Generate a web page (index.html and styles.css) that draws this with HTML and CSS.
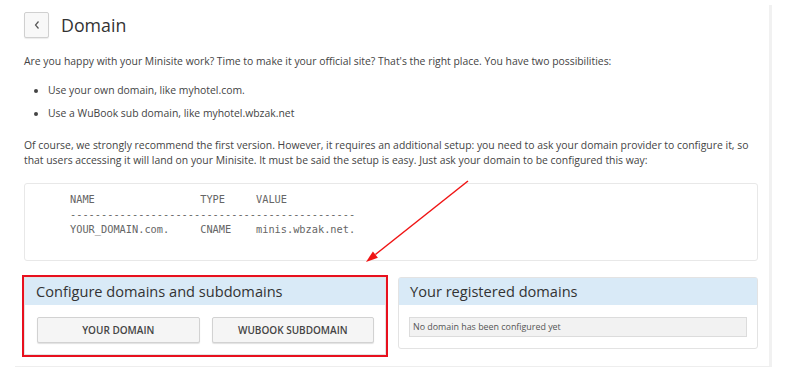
FILE: index.html
```html
<!DOCTYPE html>
<html lang="en">
<head>
    <meta charset="UTF-8">
    <meta name="viewport" content="width=device-width, initial-scale=1.0">
    <title>Domain - Minisite</title>
    <link rel="stylesheet" href="styles.css">
</head>
<body>
    <div class="page">
        <div class="page-header">
            <button class="back-btn" type="button" aria-label="Back">
                <svg width="8" height="10" viewBox="0 0 8 10"><polyline points="5.5,1.5 2.5,5 5.5,8.5" fill="none" stroke="#555" stroke-width="1.2"/></svg>
            </button>
            <h1>Domain</h1>
        </div>

        <p>Are you happy with your Minisite work? Time to make it your official site? That's the right place. You have two possibilities:</p>

        <ul class="options">
            <li>Use your own domain, like myhotel.com.</li>
            <li>Use a WuBook sub domain, like myhotel.wbzak.net</li>
        </ul>

        <p class="after-list">Of course, we strongly recommend the first version. However, it requires an additional setup: you need to ask your domain provider to configure it, so that users accessing it will land on your Minisite. It must be said the setup is easy. Just ask your domain to be configured this way:</p>

<pre class="dns">NAME                 TYPE     VALUE
----------------------------------------------
YOUR_DOMAIN.com.     CNAME    minis.wbzak.net.
&nbsp;</pre>

        <div class="panels">
            <div class="panel panel-marked">
                <div class="panel-heading">Configure domains and subdomains</div>
                <div class="panel-body buttons">
                    <button type="button" class="btn">Your domain</button>
                    <button type="button" class="btn">WuBook subdomain</button>
                </div>
            </div>
            <div class="panel">
                <div class="panel-heading">Your registered domains</div>
                <div class="panel-body">
                    <div class="empty-note">No domain has been configured yet</div>
                </div>
            </div>
        </div>
    </div>

    <!-- annotation arrow -->
    <svg class="arrow" width="790" height="383" viewBox="0 0 790 383">
        <line x1="468" y1="181" x2="375.4" y2="254.5" stroke="#f01414" stroke-width="1.5"/>
        <polygon points="366,262 377.9,257.7 372.9,251.4" fill="#f01414"/>
    </svg>
</body>
</html>
```

FILE: styles.css
```css
* {
    margin: 0;
    padding: 0;
    box-sizing: border-box;
}

body {
    background: white;
    font-family: 'Open Sans', 'Liberation Sans', sans-serif;
    font-size: 10.4px;
    line-height: 15px;
    color: #444;
    position: relative;
    width: 790px;
    height: 383px;
    overflow: hidden;
}

.page {
    margin: 5px 0 0 15px;
    width: 757px;
    padding: 7px 11px 11px 9px;
    border-right: 3px solid #f1f1f1;
    border-bottom: 1px solid #eee;
}

.page-header {
    display: flex;
    align-items: center;
    margin-bottom: 16px;
}

.back-btn {
    width: 25px;
    height: 26px;
    display: flex;
    align-items: center;
    justify-content: center;
    background: #f8f8f8;
    border: 1px solid #d0d0d0;
    border-radius: 2px;
    box-shadow: 0 1px 1px rgba(0, 0, 0, 0.08);
    cursor: pointer;
}

h1 {
    font-size: 17.8px;
    font-weight: 400;
    color: #333;
    margin-left: 12px;
    line-height: 26px;
}

.options {
    margin: 14px 0 0 0;
    padding-left: 24px;
}

.options li {
    margin-bottom: 8px;
}

.after-list {
    margin-top: 17px;
}

.dns {
    margin-top: 15px;
    padding: 8px 0 8px 45px;
    border: 1px solid #e8e8e8;
    border-radius: 3px;
    font-family: 'DejaVu Sans Mono', 'Liberation Mono', monospace;
    font-size: 10.3px;
    line-height: 15px;
    color: #666;
}

.panels {
    display: grid;
    grid-template-columns: 362px 360px;
    gap: 12px;
    align-items: start;
    margin-top: 16px;
}

.panel {
    border: 1px solid #e3e3e3;
    border-radius: 3px;
    background: white;
}

.panel-marked {
    border-radius: 0;
    outline: 2px solid #e8101e;
}

.panel-heading {
    background: #d9eaf7;
    font-size: 14.6px;
    line-height: 27px;
    color: #333;
    padding: 0 11px;
}

.panel-body {
    padding: 12px 10px 11px 10px;
}

.buttons {
    display: grid;
    grid-template-columns: 1fr 1fr;
    gap: 12px;
    padding: 12px 11px 11px 12px;
}

.btn {
    height: 26px;
    background: #f5f5f5;
    border: 1px solid #d2d2d2;
    border-radius: 2px;
    box-shadow: 0 1px 1px rgba(0, 0, 0, 0.12);
    font-family: 'Open Sans', 'Liberation Sans', sans-serif;
    font-size: 10px;
    font-weight: 600;
    text-transform: uppercase;
    color: #444;
    cursor: pointer;
}

.empty-note {
    height: 20px;
    background: #f2f2f2;
    border: 1px solid #dcdcdc;
    padding: 0 3px;
    font-size: 8.9px;
    line-height: 18px;
    color: #555;
}

.arrow {
    position: absolute;
    left: 0;
    top: 0;
    pointer-events: none;
}
```
